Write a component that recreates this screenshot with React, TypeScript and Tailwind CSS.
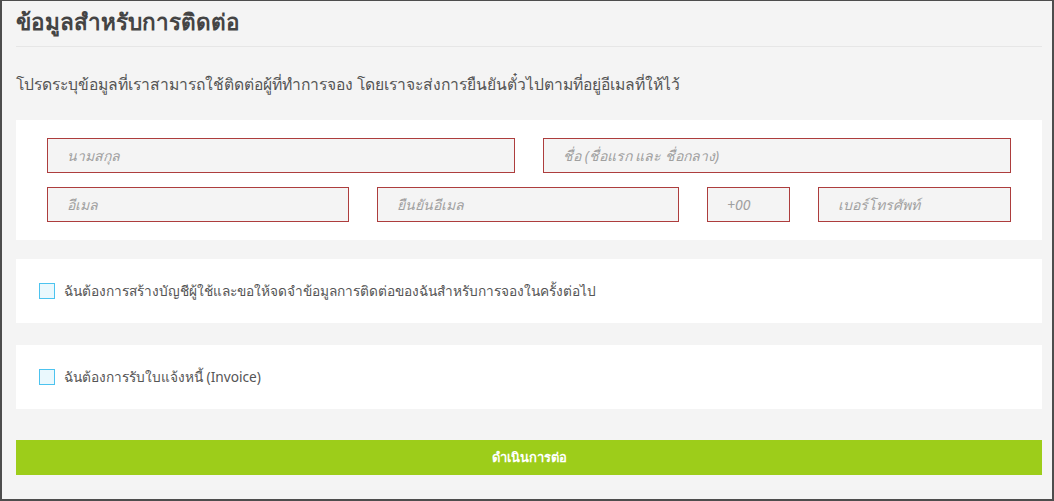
export default function App() {
  return (
    <div className="h-[501px] w-[1054px] overflow-hidden border-2 border-t border-[#4d4d4d] bg-[#f4f4f4] font-['Tahoma','Noto_Sans',sans-serif] text-[#555]">
      <div className="pl-[14px] pr-[10px]">
        <h1 className="pt-[6px] pb-[9px] text-[22.5px] font-bold leading-[30px] text-[#444]">ข้อมูลสำหรับการติดต่อ</h1>
        <div className="h-px bg-[#e6e6e6]" />
        <p className="mt-[26px] text-[15.7px] leading-[22px]">
          โปรดระบุข้อมูลที่เราสามารถใช้ติดต่อผู้ที่ทำการจอง โดยเราจะส่งการยืนยันตั๋วไปตามที่อยู่อีเมลที่ให้ไว้
        </p>

        <div className="mt-[25px] flex flex-col gap-[14px] bg-white px-[31px] py-[18px]">
          <div className="flex gap-[28px]">
            <Field placeholder="นามสกุล" className="flex-1" />
            <Field placeholder="ชื่อ (ชื่อแรก และ ชื่อกลาง)" className="flex-1" />
          </div>
          <div className="flex gap-[28px]">
            <Field placeholder="อีเมล" className="flex-1" />
            <Field placeholder="ยืนยันอีเมล" className="flex-1" />
            <Field placeholder="+00" className="w-[83px]" />
            <Field placeholder="เบอร์โทรศัพท์" className="w-[193px]" />
          </div>
        </div>

        <CheckRow className="mt-[19px]" label="ฉันต้องการสร้างบัญชีผู้ใช้และขอให้จดจำข้อมูลการติดต่อของฉันสำหรับการจองในครั้งต่อไป" />
        <CheckRow className="mt-[22px]" label="ฉันต้องการรับใบแจ้งหนี้ (Invoice)" />

        <button className="mt-[31px] flex h-[35px] w-full items-center justify-center bg-[#9dcd1a] text-[13px] font-bold text-white">
          ดำเนินการต่อ
        </button>
      </div>
    </div>
  );
}

function Field({ placeholder, className }: { placeholder: string; className?: string }) {
  return (
    <input
      placeholder={placeholder}
      className={`h-[35px] min-w-0 border border-[#ad3d3d] bg-[#f4f4f4] px-[19px] text-[14px] italic text-[#555] placeholder:text-[#a0a0a0] outline-none ${className ?? ''}`}
    />
  );
}

function CheckRow({ label, className }: { label: string; className?: string }) {
  return (
    <label className={`flex h-[64px] items-center gap-[9px] bg-white px-[23px] ${className ?? ''}`}>
      <span className="h-[16px] w-[16px] shrink-0 border border-[#4cc3ef] bg-[#eaf8fd]" />
      <span className="text-[13.7px] leading-[20px]">{label}</span>
    </label>
  );
}
